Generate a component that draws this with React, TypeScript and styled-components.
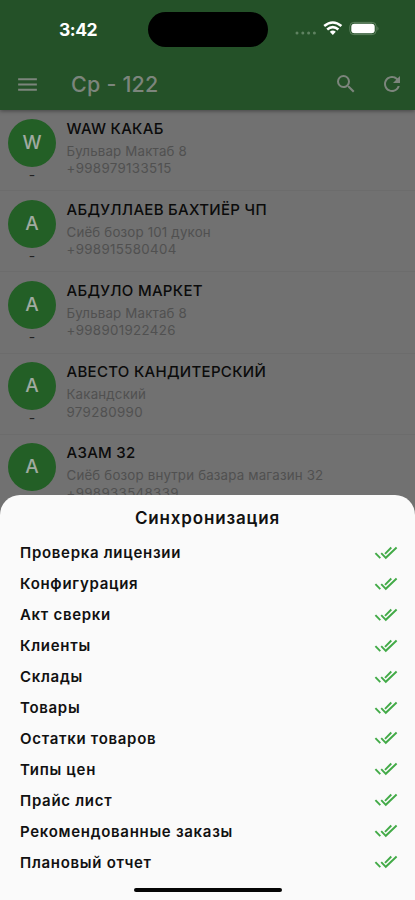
import React from "react";
import styled, { createGlobalStyle } from "styled-components";
import { MdMenu, MdSearch, MdRefresh } from "react-icons/md";

const GlobalStyle = createGlobalStyle`
  * { box-sizing: border-box; }
  body { margin: 0; font-family: Inter, "Noto Sans", sans-serif; background: #717171; }
`;

const Screen = styled.main`
  position: relative;
  width: 415px;
  height: 900px;
  overflow: hidden;
  background: #717171;
`;

const Header = styled.header`
  position: relative;
  height: 110px;
  background: #245128;
  box-shadow: 0 1px 4px rgba(0, 0, 0, 0.4);
`;

const StatusBar = styled.div`
  display: grid;
  grid-template-columns: 148px 120px 1fr;
  align-items: center;
  height: 58px;
`;

const Clock = styled.div`
  padding-left: 59px;
  color: #fff;
  font-size: 17.5px;
  font-weight: 700;
  letter-spacing: -0.5px;
`;

const Island = styled.div`
  height: 35px;
  border-radius: 18px;
  background: #000;
`;

const StatusIcons = styled.div`
  display: flex;
  align-items: center;
  padding-left: 26px;
`;

const Toolbar = styled.div`
  display: flex;
  align-items: center;
  height: 52px;
  padding: 0 11px 0 15px;
  color: #7c857c;
`;

const Title = styled.h1`
  flex: 1;
  margin: 0 0 0 31px;
  font-size: 21.5px;
  font-weight: 500;
  letter-spacing: 0.2px;
  line-height: 26px;
`;

const ToolIcon = styled.span<{ $gap?: number }>`
  display: flex;
  margin-left: ${(p) => p.$gap ?? 0}px;
`;

const Client = styled.article`
  display: flex;
  height: 81.2px;
  padding: 8.5px 0 0 8px;
  border-bottom: 1px solid #6c6c6c;
`;

const AvatarColumn = styled.div`
  width: 48px;
  margin-right: 10.5px;
  color: #222;
  font-size: 14px;
  line-height: 16px;
  text-align: center;
`;

const Avatar = styled.div`
  height: 48px;
  border-radius: 50%;
  background: #235f26;
  color: #a0aaa0;
  font-size: 19px;
  font-weight: 500;
  line-height: 48px;
`;

const ClientName = styled.h2`
  margin: 0 0 5px;
  color: #0b0b0b;
  font-size: 15px;
  font-weight: 500;
  line-height: 19px;
  letter-spacing: 0.3px;
  white-space: nowrap;
`;

const ClientDetail = styled.p<{ $spacing?: number }>`
  margin: 0;
  color: #505050;
  font-size: 13.3px;
  line-height: 17.5px;
  letter-spacing: ${(p) => p.$spacing ?? 0.18}px;
  white-space: nowrap;
`;

const Sheet = styled.section`
  position: absolute;
  top: 494.5px;
  left: 0;
  right: 0;
  bottom: 0;
  border-radius: 20px 20px 0 0;
  background: #fafafa;
  color: #111;
`;

const SheetTitle = styled.h2`
  margin: 0;
  padding-top: 12px;
  height: 43px;
  font-size: 17px;
  font-weight: 600;
  line-height: 22px;
  letter-spacing: 0.83px;
  text-align: center;
`;

const Step = styled.div`
  display: flex;
  align-items: center;
  justify-content: space-between;
  height: 30.93px;
  padding: 0 17px 0 20px;
  font-size: 15px;
  font-weight: 600;
  letter-spacing: 0.7px;
`;

const HomeBar = styled.div`
  width: 148px;
  height: 4px;
  margin: 10px auto 0;
  border-radius: 2px;
  background: #050505;
`;

const Status = () => (
  <StatusIcons>
    <svg width="94" height="20" viewBox="0 0 94 20">
      <g fill="#5f8261">
        <circle cx="3" cy="14" r="1.5" />
        <circle cx="8.8" cy="14" r="1.5" />
        <circle cx="14.6" cy="14" r="1.5" />
        <circle cx="20.4" cy="14" r="1.5" />
      </g>
      <g fill="none" stroke="#fff" strokeWidth="2.6">
        <path d="M30.2 7Q38.8 0 47.4 7" />
        <path d="M33.2 10.4Q38.8 5.8 44.4 10.4" />
      </g>
      <path d="M35.8 12.7Q38.8 10.4 41.8 12.7L38.8 16Z" fill="#fff" />
      <rect x="55.8" y="3.4" width="26.4" height="12.2" rx="4" fill="none" stroke="#5d805e" />
      <rect x="57.3" y="4.7" width="23.4" height="9.6" rx="3" fill="#fff" />
      <path d="M83.4 7.2Q85.7 9.5 83.4 11.8Z" fill="#5d805e" />
    </svg>
  </StatusIcons>
);

const DoubleCheck = () => (
  <svg width="24" height="16" viewBox="0 0 24 16" fill="none" stroke="#42aa47" strokeWidth="1.9">
    <path d="M1.4 8.2L6.3 13.2M7.2 8.2L11.8 12.8L22.6 2.5M11 8.8L17.3 2.5" />
  </svg>
);

const clients = [
  { name: "WAW КАКАБ", address: "Бульвар Мактаб 8", phone: "+998979133515" },
  { name: "АБДУЛЛАЕВ БАХТИЁР ЧП", address: "Сиёб бозор 101 дукон", phone: "+998915580404" },
  { name: "АБДУЛО МАРКЕТ", address: "Бульвар Мактаб 8", phone: "+998901922426" },
  { name: "АВЕСТО КАНДИТЕРСКИЙ", address: "Какандский", phone: "979280990" },
  { name: "АЗАМ 32", address: "Сиёб бозор внутри базара магазин 32", phone: "+998933548339" },
];

const steps = [
  "Проверка лицензии", "Конфигурация", "Акт сверки", "Клиенты", "Склады", "Товары",
  "Остатки товаров", "Типы цен", "Прайс лист", "Рекомендованные заказы", "Плановый отчет",
];

export default function App() {
  return (
    <Screen>
      <GlobalStyle />
      <Header>
        <StatusBar>
          <Clock>3:42</Clock>
          <Island />
          <Status />
        </StatusBar>
        <Toolbar>
          <ToolIcon><MdMenu size={25} /></ToolIcon>
          <Title>Ср - 122</Title>
          <ToolIcon><MdSearch size={24} /></ToolIcon>
          <ToolIcon $gap={22}><MdRefresh size={24} /></ToolIcon>
        </Toolbar>
      </Header>
      {clients.map((c) => (
        <Client key={c.name}>
          <AvatarColumn>
            <Avatar>{c.name[0]}</Avatar>
            -
          </AvatarColumn>
          <div>
            <ClientName>{c.name}</ClientName>
            <ClientDetail>{c.address}</ClientDetail>
            <ClientDetail $spacing={0.35}>{c.phone}</ClientDetail>
          </div>
        </Client>
      ))}
      <Sheet>
        <SheetTitle>Синхронизация</SheetTitle>
        {steps.map((s) => (
          <Step key={s}>
            {s}
            <DoubleCheck />
          </Step>
        ))}
        <HomeBar />
      </Sheet>
    </Screen>
  );
}
